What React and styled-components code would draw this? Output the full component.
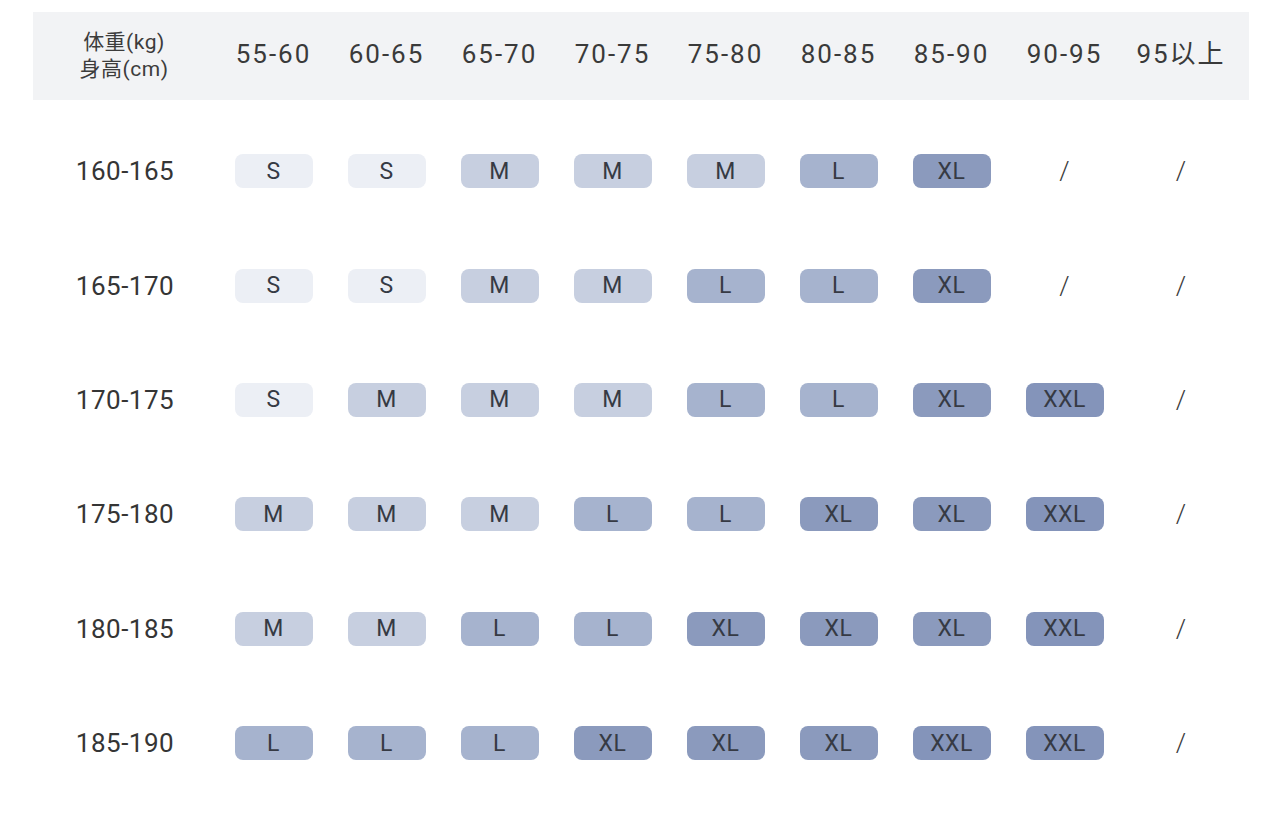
import React from 'react';
import styled, { createGlobalStyle } from 'styled-components';

const GlobalStyle = createGlobalStyle`
  body {
    margin: 0;
    background: #ffffff;
    font-family: Roboto, "Noto Sans CJK SC", sans-serif;
    color: #353535;
  }
`;

const weights = ['55-60', '60-65', '65-70', '70-75', '75-80', '80-85', '85-90', '90-95', '95以上'];

const rows = [
  { h: '160-165', sizes: ['S', 'S', 'M', 'M', 'M', 'L', 'XL', '/', '/'] },
  { h: '165-170', sizes: ['S', 'S', 'M', 'M', 'L', 'L', 'XL', '/', '/'] },
  { h: '170-175', sizes: ['S', 'M', 'M', 'M', 'L', 'L', 'XL', 'XXL', '/'] },
  { h: '175-180', sizes: ['M', 'M', 'M', 'L', 'L', 'XL', 'XL', 'XXL', '/'] },
  { h: '180-185', sizes: ['M', 'M', 'L', 'L', 'XL', 'XL', 'XL', 'XXL', '/'] },
  { h: '185-190', sizes: ['L', 'L', 'L', 'XL', 'XL', 'XL', 'XXL', 'XXL', '/'] },
];

const tones = {
  S: '#eceff5',
  M: '#c7cfe0',
  L: '#a6b3ce',
  XL: '#8b9abd',
  XXL: '#8494ba',
};

const Page = styled.div`
  width: 1284px;
  padding: 12px 0 0 33px;
  box-sizing: border-box;
`;

const Grid = styled.div`
  display: grid;
  grid-template-columns: 184px repeat(8, 113px) 132px;
  width: 1216px;
`;

const HeadBand = styled(Grid)`
  background: #f2f3f5;
  height: 88px;
  align-items: center;
  padding-bottom: 4px;
  box-sizing: border-box;
`;

const Row = styled(Grid)`
  height: 114.4px;
  align-items: center;
`;

const Body = styled.div`
  padding-top: 14px;
`;

const Corner = styled.div`
  display: flex;
  flex-direction: column;
  align-items: center;
  font-size: 21px;
  line-height: 27px;
  color: #3c3c3c;
  padding-right: 2px;
  letter-spacing: 0.5px;
  margin-top: 4px;
`;

const HeadCell = styled.div`
  text-align: center;
  font-size: 26px;
  line-height: 30px;
  letter-spacing: 2px;
  color: #3a3a3a;
  transform: translateX(${p => (p.$last ? '-6px' : '0')});
`;

const Label = styled.div`
  text-align: center;
  font-size: 26px;
  letter-spacing: 0.5px;
  color: #353535;
`;

const Cell = styled.div`
  display: flex;
  justify-content: center;
  transform: translateX(${p => (p.$last ? '-6px' : '0')});
`;

const Pill = styled.div`
  width: 78px;
  height: 34px;
  border-radius: 8px;
  background: ${p => tones[p.$size]};
  display: flex;
  align-items: center;
  justify-content: center;
  font-size: 23px;
  color: #363a44;
  letter-spacing: 0.5px;
`;

const Slash = styled.span`
  font-size: 26px;
  font-weight: 300;
  color: #3a3a3a;
`;

export default function App() {
  return (
    <Page>
      <GlobalStyle />
      <HeadBand>
        <Corner>
          <span>体重(kg)</span>
          <span>身高(cm)</span>
        </Corner>
        {weights.map((w, i) => (
          <HeadCell key={w} $last={i === weights.length - 1}>{w}</HeadCell>
        ))}
      </HeadBand>
      <Body>
        {rows.map(r => (
          <Row key={r.h}>
            <Label>{r.h}</Label>
            {r.sizes.map((s, i) => (
              <Cell key={i} $last={i === r.sizes.length - 1}>
                {s === '/' ? <Slash>/</Slash> : <Pill $size={s}>{s}</Pill>}
              </Cell>
            ))}
          </Row>
        ))}
      </Body>
    </Page>
  );
}
